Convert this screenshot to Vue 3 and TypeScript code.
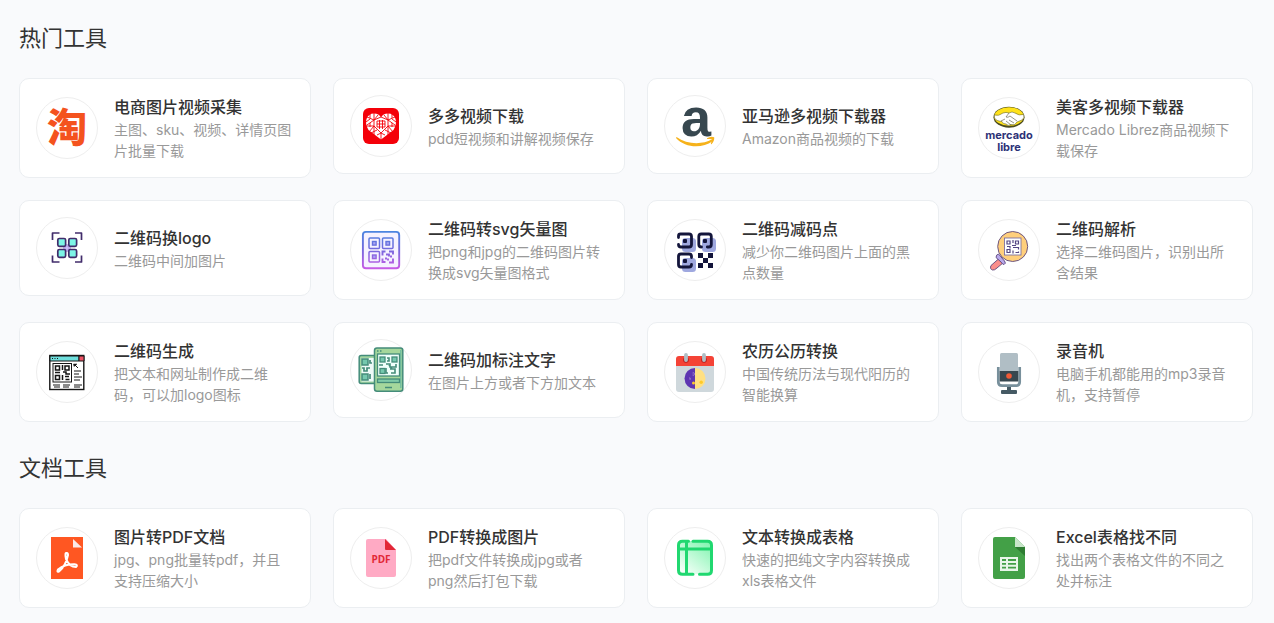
<script setup lang="ts">
interface Tool {
  icon: string
  title: string
  desc: string
}

interface Section {
  heading: string
  tools: Tool[]
}

const sections: Section[] = [
  {
    heading: '热门工具',
    tools: [
      { icon: 'taobao', title: '电商图片视频采集', desc: '主图、sku、视频、详情页图片批量下载' },
      { icon: 'pdd', title: '多多视频下载', desc: 'pdd短视频和讲解视频保存' },
      { icon: 'amazon', title: '亚马逊多视频下载器', desc: 'Amazon商品视频的下载' },
      { icon: 'mercado', title: '美客多视频下载器', desc: 'Mercado Librez商品视频下载保存' },
      { icon: 'scan', title: '二维码换logo', desc: '二维码中间加图片' },
      { icon: 'vector', title: '二维码转svg矢量图', desc: '把png和jpg的二维码图片转换成svg矢量图格式' },
      { icon: 'reduce', title: '二维码减码点', desc: '减少你二维码图片上面的黑点数量' },
      { icon: 'parse', title: '二维码解析', desc: '选择二维码图片，识别出所含结果' },
      { icon: 'generate', title: '二维码生成', desc: '把文本和网址制作成二维码，可以加logo图标' },
      { icon: 'phones', title: '二维码加标注文字', desc: '在图片上方或者下方加文本' },
      { icon: 'calendar', title: '农历公历转换', desc: '中国传统历法与现代阳历的智能换算' },
      { icon: 'mic', title: '录音机', desc: '电脑手机都能用的mp3录音机，支持暂停' },
    ],
  },
  {
    heading: '文档工具',
    tools: [
      { icon: 'acrobat', title: '图片转PDF文档', desc: 'jpg、png批量转pdf，并且支持压缩大小' },
      { icon: 'pdf', title: 'PDF转换成图片', desc: '把pdf文件转换成jpg或者png然后打包下载' },
      { icon: 'table', title: '文本转换成表格', desc: '快速的把纯文字内容转换成xls表格文件' },
      { icon: 'excel', title: 'Excel表格找不同', desc: '找出两个表格文件的不同之处并标注' },
    ],
  },
]
</script>

<template>
  <main class="page">
    <section v-for="section in sections" :key="section.heading" class="section">
      <h2 class="heading">{{ section.heading }}</h2>
      <div class="grid">
        <a v-for="tool in section.tools" :key="tool.icon" class="card" href="#">
          <span class="icon">
            <svg viewBox="1 1 60 60" aria-hidden="true">
              <g v-if="tool.icon === 'taobao'">
                <text class="taobao" x="31" y="45" text-anchor="middle">淘</text>
              </g>

              <g v-else-if="tool.icon === 'pdd'">
                <rect x="13" y="13" width="36" height="36" rx="6" fill="#f40009" />
                <path d="M31 44.500 L18.500 35 Q15 29 16.500 24 Q18.500 18.500 24 18.500 Q29 18.500 31 22.500 Q33 18.500 38 18.500 Q43.500 18.500 45.500 24 Q47 29 43.500 35Z" fill="#fff" />
                <g fill="none" stroke="#f40009" stroke-width="0.900">
                  <path d="M24 18v7l-7 5M38 18v7l7 5M17 22l7 3 4-5M45 22l-7 3-4-5M16 31h8l-5 6M46 31h-8l5 6M24 25v6l7 7 7-7v-6l-7-3-7 3M31 38v7M24 31v9M38 31v9M27 35l-6 3M35 35l6 3M20 24l-4 3M42 24l4 3M20 19v4M42 19v4M20 28v4M42 28v4" />
                  <path d="M27 26h8v6h-8zM27 29h8M29.500 25v9M32.500 25v9M27 40l4-2 4 2" />
                </g>
              </g>

              <g v-else-if="tool.icon === 'amazon'">
                <text class="amazon" x="32" y="41" text-anchor="middle">a</text>
                <path d="M12.500 42 C23 49.500 38 50 48 44.300 Q49.500 45 48.500 46.200 C38 54 21 53 12 43Z" fill="#f6b21b" />
                <path d="M43 43.200 Q47 40.700 50.200 42.300 Q50.700 46 47.500 49.300 Q46.500 49.300 47 48 Q48.500 45 48 44.200 Q46.500 43.700 43 44Z" fill="#f6b21b" />
              </g>

              <g v-else-if="tool.icon === 'mercado'">
                <ellipse cx="31" cy="20.200" rx="15.500" ry="10.500" fill="#4b4b20" />
                <ellipse cx="31" cy="19.500" rx="14.800" ry="9.300" fill="#ffe21a" />
                <path d="M16.500 18 Q20.500 19.500 25 16 Q28 14.800 31 16 Q34 14 37 16 Q41 19 45.500 17.500 Q47 21 44 23 L39 25 Q37 29 33 27.500 Q30 29.500 28 27 Q24.500 27 24 24.500 Q18 24 16.500 21Z" fill="#fff" stroke="#6c692d" stroke-width="0.600" />
                <path d="M31 16l-3 4q2 1 4-1l7 5M31 23l5 3M28 24l5 4M23 24l4-2" fill="none" stroke="#6c6b58" stroke-width="0.700" />
                <text class="mercado" x="31" y="42" text-anchor="middle">mercado</text>
                <text class="mercado" x="31" y="54" text-anchor="middle">libre</text>
              </g>

              <g v-else-if="tool.icon === 'scan'" fill="none" stroke="#412c6b" stroke-width="1.700" stroke-linejoin="round">
                <path d="M27 29h8M27 33h8M29 27v8M33 27v8" stroke="#bca8ef" stroke-width="3" />
                <g fill="#7df5e6">
                  <rect x="21.800" y="21.500" width="7.800" height="7.800" rx="1.500" />
                  <rect x="32.800" y="21.500" width="7.800" height="7.800" rx="1.500" />
                  <rect x="21.800" y="32.500" width="7.800" height="7.800" rx="1.500" />
                  <rect x="32.800" y="32.500" width="7.800" height="7.800" rx="1.500" />
                </g>
                <path d="M16.500 23v-7h7M39 16h6.500v7M16.500 38.500v6.500h7M39 45h6.500v-6.500" />
              </g>

              <g v-else-if="tool.icon === 'vector'" fill="none" stroke="url(#vector-g)">
                <defs>
                  <linearGradient id="vector-g" gradientUnits="userSpaceOnUse" x1="31" y1="12" x2="31" y2="50">
                    <stop offset="0" stop-color="#4b86e0" />
                    <stop offset="0.500" stop-color="#7668dd" />
                    <stop offset="1" stop-color="#c95be6" />
                  </linearGradient>
                </defs>
                <rect x="12.900" y="12.900" width="36.300" height="36.300" rx="3" fill="#f6f2ff" stroke-width="1.900" />
                <g stroke-width="1.500">
                  <rect x="19" y="19" width="10.500" height="10.500" rx="1" />
                  <rect x="32.500" y="19" width="10.500" height="10.500" rx="1" />
                  <rect x="19" y="32.500" width="10.500" height="10.500" rx="1" />
                  <path d="M32.500 36.500v-4h3M39 32.500h4v3M32.500 39.500v3.500h3M39 43.500h4v-4M36 35.500h3v2M35 39.500h2M40 37.500h2M38 41.500v-2" stroke-width="1.900" />
                </g>
                <g fill="#a9a5f2" stroke-width="1.400">
                  <rect x="22.500" y="22.500" width="3.600" height="3.600" />
                  <rect x="36" y="22.500" width="3.600" height="3.600" />
                  <rect x="22.500" y="36" width="3.600" height="3.600" />
                </g>
              </g>

              <g v-else-if="tool.icon === 'reduce'">
                <g fill="#9fa8df">
                  <rect x="18" y="19" width="14" height="14" rx="3.500" />
                  <rect x="38" y="19" width="14" height="14" rx="3.500" />
                  <rect x="18" y="39" width="14" height="14" rx="3.500" />
                </g>
                <g fill="none" stroke="#13153b" stroke-width="2.800" stroke-linecap="round">
                  <path d="M14.500 18.500V17q0-2 2-2h8.500q2.500 0 2.500 2.500v8q0 2.500-2.500 2.500h-8q-2.500 0-2.500-2.500" />
                  <path d="M37.500 28q-2.700 0-2.700-2.500v-8q0-2.500 2.500-2.500h7.500q2.500 0 2.500 2.500v8q0 2.500-2.500 2.500h-1.500" />
                  <path d="M27.500 38.500v-1q0-2.500-2.500-2.500h-8q-2.500 0-2.500 2.500v8q0 2.500 2.500 2.500h8q2.500 0 2.500-2.500" />
                </g>
                <g fill="#13153b">
                  <rect x="19" y="20" width="4" height="4" rx="1" />
                  <rect x="39" y="20" width="4" height="4" rx="1" />
                  <rect x="19" y="40" width="4" height="4" rx="1" />
                  <path d="M34 34h5v5h-5zM44 34h5v5h-5zM39 39h5v5h-5zM34 44h5v5h-5zM44 44h5v5h-5z" />
                </g>
              </g>

              <g v-else-if="tool.icon === 'parse'" stroke="#5e477c" stroke-width="0.900">
                <path d="M21 39.500 L13 46.500 Q11.500 50 14.500 51 Q16.500 51.500 19 49 L25.500 43.500Z" fill="#fa8e8b" />
                <path d="M20.500 35 L26.500 42 Q28.500 44.500 26 45.500 Q24.500 45.500 23 43 L18 38.500 Q18 35.500 20.500 35Z" fill="#b9a9ec" />
                <circle cx="34.700" cy="27.500" r="15" fill="#ffcf7c" />
                <rect x="26.500" y="19" width="16.500" height="17" fill="#fff" stroke="#7f719f" />
                <g fill="none" stroke="#554784" stroke-width="1.200">
                  <path d="M29 22h3v3h-3zM37.500 22h3v3h-3zM29 30.500h3v3h-3zM35 21v3M34 26.500h4M29 27.500h3v2M35 28.500h5.500v2M35 31.500v3M37.500 33.500h3v-1" />
                </g>
              </g>

              <g v-else-if="tool.icon === 'generate'" stroke="#161616">
                <rect x="13.800" y="14.500" width="34" height="34" fill="#fff" stroke-width="1.400" />
                <path d="M14 15h29v5H14z" fill="#6edfdd" stroke-width="1" />
                <path d="M43 15h5v5h-5z" fill="#ed5265" stroke-width="1" />
                <path d="M16 17.500h1M18.500 17.500h1M21 17.500h1" stroke-width="1" />
                <rect x="17" y="22.500" width="18.500" height="18.500" fill="none" stroke-width="1" />
                <g fill="none" stroke-width="1.500">
                  <path d="M19.500 25h4v4h-4zM29 25h4v4h-4zM19.500 34.500h4v4h-4zM26.500 24v5M19 31.500h5M27 31h3v2h4M26.500 34v5M29 35.500h4M29.500 38.500h4" />
                  <path d="M38 23l4 4M38 30h7M38 33h5M38 36h8M38 39h6M17 44h7M18 46h6M27 44h7M27 46h6M38 44h8M38 46h6" stroke-width="1" />
                  <path d="M37.500 23h3.500l-3 2.500z" fill="#161616" stroke-width="0.500" />
                </g>
              </g>

              <g v-else-if="tool.icon === 'phones'" stroke="#448c7a">
                <rect x="9.200" y="16.500" width="20" height="28" rx="2" fill="#a1d5a0" stroke-width="1.500" />
                <rect x="11.500" y="19" width="14" height="23.500" fill="#eefaf7" stroke="none" />
                <g fill="#75c8ae" stroke-width="1.500">
                  <rect x="12" y="20" width="6" height="6" />
                  <rect x="12" y="35" width="6" height="6" />
                </g>
                <path d="M12 29h2v3h3v-3h3M20 21v3h2M20 35v5" fill="none" stroke-width="1.700" />
                <rect x="24.500" y="9" width="28.300" height="43.300" rx="2.500" fill="#a5d79c" stroke-width="1.500" />
                <path d="M50.800 11v38" stroke="#73bea0" stroke-width="1.500" />
                <rect x="27.500" y="15" width="22" height="22" fill="#f0fffb" stroke-width="1.300" />
                <g fill="#75c8ae" stroke-width="1.300">
                  <rect x="30" y="18" width="5" height="5" />
                  <rect x="42" y="18" width="5" height="5" />
                  <rect x="30" y="29.500" width="5" height="5" />
                </g>
                <path d="M37 19h2v3h-2M29 26h4M36 25h4v3h6v-3M36 29v5h2M40 30h5v4h-4M39 26l3 4" fill="none" stroke-width="1.600" />
                <rect x="27.500" y="40" width="22" height="3.500" fill="#80cba8" stroke-width="1.300" />
                <path d="M27 12h1.500M30 12h1.500M35 48.500h7" stroke-width="1.400" />
              </g>

              <g v-else-if="tool.icon === 'calendar'">
                <path d="M12 24h38v24q0 3-3 3H15q-3 0-3-3z" fill="#cfd8dc" />
                <path d="M12 25v-7q0-3 3-3h32q3 0 3 3v7z" fill="#f44336" />
                <circle cx="22" cy="19" r="2.800" fill="#b71c1c" />
                <circle cx="40" cy="19" r="2.800" fill="#b71c1c" />
                <path d="M22 14v5M40 14v5" stroke="#b0bec5" stroke-width="3.800" stroke-linecap="round" />
                <path d="M31 27a10.500 10.500 0 0 0 0 21z" fill="#5e35b1" />
                <path d="M31 27a10.500 10.500 0 0 1 0 21z" fill="#ffe082" />
                <path d="M28.500 32q2-1 2 1t-2 1M25 37q2-1 1 2" fill="none" stroke="#9a7acb" stroke-width="1" />
                <circle cx="29.500" cy="42" r="1.500" fill="#ffca28" />
                <circle cx="37.200" cy="41.300" r="1.700" fill="#ffca28" />
              </g>

              <g v-else-if="tool.icon === 'mic'">
                <path d="M20.300 26v15q0 3.700 3.700 3.700h14q3.700 0 3.700-3.700V26" fill="none" stroke="#78909c" stroke-width="2.700" />
                <rect x="22" y="12" width="18" height="19" rx="1.500" fill="#b0bec5" />
                <rect x="21.700" y="30" width="18.600" height="10.500" fill="#37474f" />
                <circle cx="31" cy="35" r="2.800" fill="#ef5a36" />
                <path d="M29 46h4v4h-4z" fill="#455a64" />
                <rect x="23" y="49" width="16" height="4" rx="1" fill="#455a64" />
              </g>

              <g v-else-if="tool.icon === 'acrobat'">
                <path d="M15 10h32v42H15z" fill="#ff5722" />
                <path d="M37 12v8.500h9z" fill="#fbe9e7" />
                <path d="M31 26.500 Q28.500 24 30 32 Q33.500 40 40 40 Q42.500 38 38.500 37.300 Q29 37 22 42.500 Q20.500 45.500 23 44.500 Q30 38.500 32 28 Q32 25.500 30.500 26" fill="none" stroke="#fff" stroke-width="2" stroke-linecap="round" />
              </g>

              <g v-else-if="tool.icon === 'pdf'">
                <path d="M18 12h18l10 11v25q0 2-2 2H18q-2 0-2-2V14q0-2 2-2z" fill="#ffaac4" />
                <path d="M35 12l11 11H36q-1 0-1-1z" fill="#e22736" />
                <text class="pdf" x="31" y="36" text-anchor="middle">PDF</text>
              </g>

              <g v-else-if="tool.icon === 'table'">
                <defs>
                  <linearGradient id="table-g" x1="1" y1="0" x2="0.200" y2="1">
                    <stop offset="0" stop-color="#7bf4ac" />
                    <stop offset="1" stop-color="#f6fff9" />
                  </linearGradient>
                </defs>
                <rect x="14.500" y="14" width="33" height="33" rx="4" fill="url(#table-g)" />
                <path d="M24.500 14.200H18.500q-4 0-4 4v25q0 4 4 4H29M35.500 47.200h8q4 0 4-4v-25q0-4-4-4H29M15 22h32M22.500 14.500v32" fill="none" stroke="#20d870" stroke-width="3" stroke-linecap="round" />
              </g>

              <g v-else-if="tool.icon === 'excel'">
                <path d="M17 10h20l10 10v30q0 2-2 2H17q-2 0-2-2V12q0-2 2-2z" fill="#43a047" />
                <path d="M37 20h10v9z" fill="#2e7d32" />
                <path d="M37 10l10 10H37z" fill="#c8e6c9" />
                <rect x="22" y="30" width="18" height="14" fill="#e8f5e9" />
                <path d="M24 33h4M30 33h8M24 36.800h4M30 36.800h8M24 40.600h4M30 40.600h8" stroke="#43a047" stroke-width="1.800" />
              </g>
            </svg>
          </span>
          <span class="body">
            <strong class="title">{{ tool.title }}</strong>
            <span class="desc">{{ tool.desc }}</span>
          </span>
        </a>
      </div>
    </section>
  </main>
</template>

<style>
body {
  margin: 0;
  background: #f9fafc;
}
</style>

<style scoped>
.page {
  padding: 21px 21px 15px 19px;
  font-family: Inter, "Noto Sans CJK SC", sans-serif;
  color: #333;
}

.section + .section {
  margin-top: 29px;
}

.heading {
  margin: 0 0 22px;
  font-size: 22px;
  line-height: 35px;
  font-weight: 400;
}

.grid {
  display: grid;
  grid-template-columns: repeat(4, minmax(0, 1fr));
  gap: 22px;
  align-items: start;
}

.card {
  display: flex;
  align-items: center;
  gap: 16px;
  padding: 16px;
  border: 1px solid #ebeef1;
  border-radius: 10px;
  background: #fff;
  color: inherit;
  text-decoration: none;
}

.icon {
  box-sizing: border-box;
  flex: none;
  width: 62px;
  height: 62px;
  border: 1px solid #eee;
  border-radius: 50%;
}

.icon svg {
  display: block;
  width: 100%;
  height: 100%;
  overflow: visible;
}

.body {
  flex: 1;
  min-width: 0;
}

.title {
  display: block;
  font-size: 16px;
  line-height: 24px;
  font-weight: 500;
}

.desc {
  display: block;
  font-size: 14px;
  line-height: 21px;
  color: #999;
}

.taobao {
  font: 900 40px "Noto Sans CJK SC", sans-serif;
  fill: #f4531e;
}

.amazon {
  font: 700 54px "Liberation Sans", sans-serif;
  fill: #37474f;
}

.mercado {
  font: 700 11px Inter, sans-serif;
  fill: #2d3277;
}

.pdf {
  font: 700 10px "Open Sans", sans-serif;
  fill: #e22736;
}
</style>
